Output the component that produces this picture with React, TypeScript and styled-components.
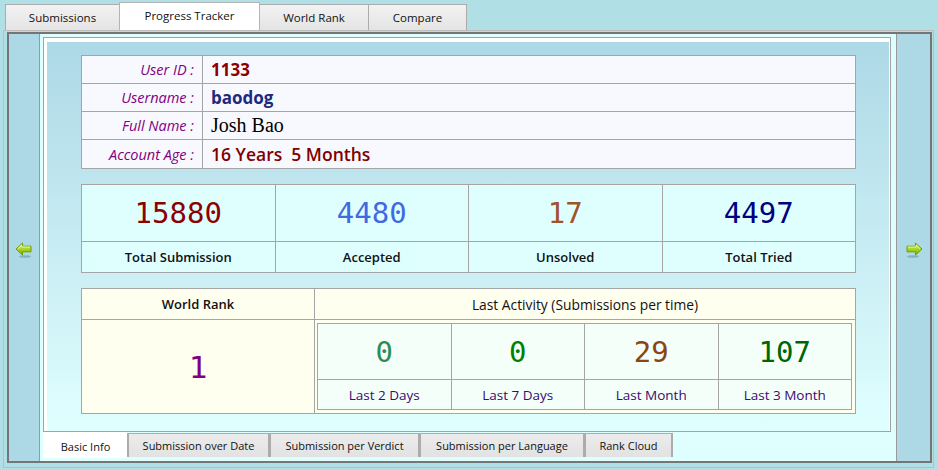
import React from "react";
import styled, { createGlobalStyle } from "styled-components";

const Global = createGlobalStyle`
  html, body { margin: 0; padding: 0; }
  body {
    background: #b0dfe5;
    font-family: "Open Sans", "Noto Sans", sans-serif;
    color: #000;
  }
  * { box-sizing: border-box; }
`;

const Page = styled.div`
  width: 938px;
  height: 470px;
  overflow: hidden;
  background: #b0dfe5;
`;

const TopTabs = styled.div`
  display: flex;
  align-items: flex-end;
  height: 30px;
  padding-left: 5px;
`;

const TopTab = styled.div<{ $w: number; $active?: boolean }>`
  width: ${(p) => p.$w}px;
  height: ${(p) => (p.$active ? 28 : 26)}px;
  margin-right: -1px;
  border: 1px solid ${(p) => (p.$active ? "#b4b4b4" : "#acacac")};
  border-bottom: none;
  background: ${(p) => (p.$active ? "#ffffff" : "linear-gradient(#f2f2f2, #e4e4e4)")};
  display: flex;
  align-items: center;
  justify-content: center;
  font-size: 11.5px;
  color: #111;
  padding-bottom: ${(p) => (p.$active ? 3 : 0)}px;
  position: relative;
  z-index: ${(p) => (p.$active ? 2 : 1)};
`;

const Frame = styled.div`
  margin: 0 4px 0 3px;
  height: 438px;
  border: 1px solid #bdbdbd;
  padding: 1px 1px 4px 3px;
`;

const Inner = styled.div`
  height: 100%;
  border: 2px solid #757575;
  display: flex;
`;

const SideColumn = styled.div<{ $side: "left" | "right" }>`
  width: ${(p) => (p.$side === "left" ? 31 : 34)}px;
  background: #add8e6;
  ${(p) => (p.$side === "left" ? "border-right" : "border-left")}: 1px solid #9a9a9a;
  display: flex;
  align-items: center;
  justify-content: center;
  padding-top: 4px;
`;

const Middle = styled.div`
  width: 856px;
  background: #dfffff;
  padding: 3px 5px 0 3px;
  display: flex;
  flex-direction: column;
`;

const Panel = styled.div`
  height: 395px;
  border: 1px solid #a2a2a2;
  background: #ffffff;
  padding: 4px 1px 0 3px;
`;

const Content = styled.div`
  height: 100%;
  background: linear-gradient(#add8e6, #e0ffff);
  padding: 13px 33px 0 34px;
  display: flex;
  flex-direction: column;
`;

const Grid = styled.div<{ $cols: string; $rows: string; $mt?: number }>`
  display: grid;
  grid-template-columns: ${(p) => p.$cols};
  grid-template-rows: ${(p) => p.$rows};
  gap: 1px;
  padding: 1px;
  background: #a5a5a5;
  margin-top: ${(p) => p.$mt ?? 0}px;
`;

const LabelCell = styled.div`
  background: #f8f8ff;
  display: flex;
  align-items: center;
  justify-content: flex-end;
  padding-right: 8px;
  font-style: italic;
  font-size: 14.5px;
  color: #800080;
`;

const ValueCell = styled.div<{ $color: string; $size: number; $weight?: number; $serif?: boolean }>`
  background: #f8f8ff;
  display: flex;
  align-items: center;
  padding-left: 8px;
  color: ${(p) => p.$color};
  font-size: ${(p) => p.$size}px;
  font-weight: ${(p) => p.$weight ?? 400};
  font-family: ${(p) => (p.$serif ? '"Liberation Serif", serif' : 'inherit')};
`;

const StatCell = styled.div<{ $bg: string }>`
  background: ${(p) => p.$bg};
  display: flex;
  align-items: center;
  justify-content: center;
`;

const BigNumber = styled.span<{ $color: string; $size?: number }>`
  font-family: "DejaVu Sans Mono", "Liberation Mono", monospace;
  font-size: ${(p) => p.$size ?? 29}px;
  color: ${(p) => p.$color};
`;

const StatLabel = styled.span<{ $color?: string; $weight?: number; $size?: number }>`
  font-size: ${(p) => p.$size ?? 13}px;
  font-weight: ${(p) => p.$weight ?? 600};
  color: ${(p) => p.$color ?? "#111"};
`;

const RankBody = styled.div`
  background: #fffff0;
  display: flex;
  align-items: center;
  justify-content: center;
`;

const ActivityBody = styled.div`
  background: #fffff0;
  padding: 3px 3px 3px 2px;
  display: flex;
`;

const ActivityGrid = styled(Grid)`
  flex: 1;
`;

const BottomTabs = styled.div`
  display: flex;
  align-items: flex-start;
  height: 26px;
`;

const BottomTab = styled.div<{ $w: number; $active?: boolean }>`
  width: ${(p) => p.$w}px;
  height: ${(p) => (p.$active ? 26 : 24)}px;
  margin-top: ${(p) => (p.$active ? 0 : 1)}px;
  margin-right: -1px;
  border-style: solid;
  border-color: #acacac;
  border-width: ${(p) => (p.$active ? "0" : "1px 2px 0 2px")};
  background: ${(p) => (p.$active ? "#ffffff" : "linear-gradient(#ececec, #e2e2e2)")};
  display: flex;
  align-items: center;
  justify-content: center;
  font-size: 11px;
  color: #111;
  padding-top: ${(p) => (p.$active ? 3 : 0)}px;
`;

const Arrow = ({ dir }: { dir: "left" | "right" }) => (
  <svg width="18" height="16" viewBox="0 0 18 16" style={{ transform: dir === "right" ? "scaleX(-1)" : undefined }}>
    <defs>
      <linearGradient id={`ag-${dir}`} x1="0" y1="0" x2="0" y2="1">
        <stop offset="0" stopColor="#dcf870" />
        <stop offset="0.5" stopColor="#a8d824" />
        <stop offset="1" stopColor="#78a800" />
      </linearGradient>
    </defs>
    <ellipse cx="10" cy="14.5" rx="6" ry="1.3" fill="#6f8f9a" opacity="0.55" />
    <path
      d="M1 7 L7.5 1 L7.5 4.2 L16 4.2 L16 9.8 L7.5 9.8 L7.5 13 Z"
      fill={`url(#ag-${dir})`}
      stroke="#6e9c08"
      strokeWidth="1"
      strokeLinejoin="round"
    />
    <path d="M2.8 6.9 L6.8 3.2 L6.8 5 L15.2 5" fill="none" stroke="#f2ffc0" strokeWidth="0.8" />
  </svg>
);

const stats = [
  { n: "15880", c: "#8b0000", l: "Total Submission" },
  { n: "4480", c: "#4169e1", l: "Accepted" },
  { n: "17", c: "#a0522d", l: "Unsolved" },
  { n: "4497", c: "#000080", l: "Total Tried" },
];

const activity = [
  { n: "0", c: "#2e8b57", l: "Last 2 Days" },
  { n: "0", c: "#008000", l: "Last 7 Days" },
  { n: "29", c: "#8b4513", l: "Last Month" },
  { n: "107", c: "#006400", l: "Last 3 Month" },
];

export default function App() {
  return (
    <Page>
      <Global />
      <TopTabs>
        <TopTab $w={115}>Submissions</TopTab>
        <TopTab $w={141} $active>Progress Tracker</TopTab>
        <TopTab $w={110}>World Rank</TopTab>
        <TopTab $w={99}>Compare</TopTab>
      </TopTabs>
      <Frame>
        <Inner>
          <SideColumn $side="left">
            <Arrow dir="left" />
          </SideColumn>
          <Middle>
            <Panel>
              <Content>
                <Grid $cols="120px 1fr" $rows="27px 27px 27px 28px">
                  <LabelCell>User ID :</LabelCell>
                  <ValueCell $color="#8b0000" $size={17} $weight={700}>1133</ValueCell>
                  <LabelCell>Username :</LabelCell>
                  <ValueCell $color="#1c2a80" $size={17} $weight={700}>baodog</ValueCell>
                  <LabelCell>Full Name :</LabelCell>
                  <ValueCell $color="#000" $size={20} $serif>Josh Bao</ValueCell>
                  <LabelCell>Account Age :</LabelCell>
                  <ValueCell $color="#800000" $size={17.5} $weight={600}>16 Years&nbsp;&nbsp;5 Months</ValueCell>
                </Grid>

                <Grid $cols="repeat(4, 1fr)" $rows="56px 30px" $mt={15}>
                  {stats.map((s) => (
                    <StatCell key={s.l + "n"} $bg="#dfffff">
                      <BigNumber $color={s.c}>{s.n}</BigNumber>
                    </StatCell>
                  ))}
                  {stats.map((s) => (
                    <StatCell key={s.l} $bg="#dfffff">
                      <StatLabel>{s.l}</StatLabel>
                    </StatCell>
                  ))}
                </Grid>

                <Grid $cols="232px 1fr" $rows="30px 93px" $mt={15}>
                  <StatCell $bg="#fffff0">
                    <StatLabel>World Rank</StatLabel>
                  </StatCell>
                  <StatCell $bg="#fffff0">
                    <StatLabel $weight={400} $size={13.8}>Last Activity (Submissions per time)</StatLabel>
                  </StatCell>
                  <RankBody>
                    <BigNumber $color="#800080" $size={31}>1</BigNumber>
                  </RankBody>
                  <ActivityBody>
                    <ActivityGrid $cols="repeat(4, 1fr)" $rows="55px 29px">
                      {activity.map((a) => (
                        <StatCell key={a.l + "n"} $bg="#f4fffa">
                          <BigNumber $color={a.c}>{a.n}</BigNumber>
                        </StatCell>
                      ))}
                      {activity.map((a) => (
                        <StatCell key={a.l} $bg="#f4fffa">
                          <StatLabel $weight={400} $size={13.5} $color="#3b0a6e">{a.l}</StatLabel>
                        </StatCell>
                      ))}
                    </ActivityGrid>
                  </ActivityBody>
                </Grid>
              </Content>
            </Panel>
            <BottomTabs>
              <BottomTab $w={85} $active>Basic Info</BottomTab>
              <BottomTab $w={143}>Submission over Date</BottomTab>
              <BottomTab $w={151}>Submission per Verdict</BottomTab>
              <BottomTab $w={166}>Submission per Language</BottomTab>
              <BottomTab $w={89}>Rank Cloud</BottomTab>
            </BottomTabs>
          </Middle>
          <SideColumn $side="right">
            <Arrow dir="right" />
          </SideColumn>
        </Inner>
      </Frame>
    </Page>
  );
}
